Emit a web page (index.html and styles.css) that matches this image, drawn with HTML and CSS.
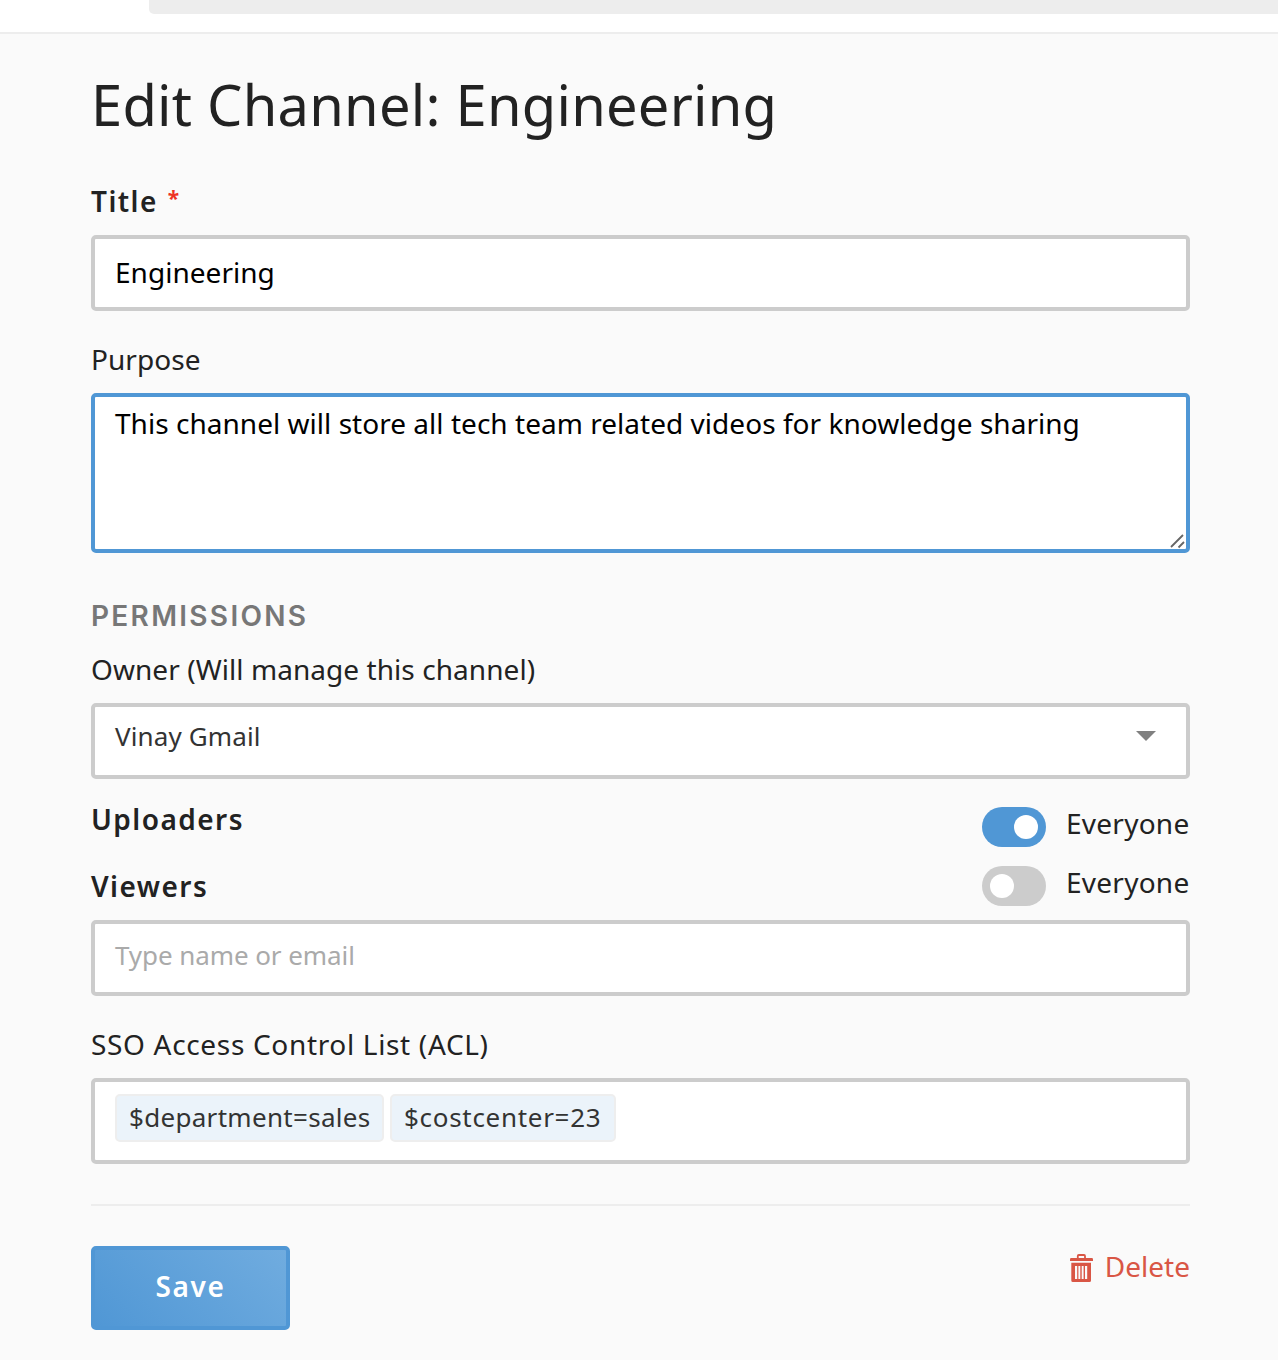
FILE: index.html
```html
<!DOCTYPE html>
<html lang="en">
<head>
<meta charset="utf-8">
<title>Edit Channel: Engineering</title>
<link rel="stylesheet" href="styles.css">
</head>
<body>
<header class="topbar"><div class="search"></div></header>
<main class="page">
  <h1 class="heading">Edit Channel: Engineering</h1>
  <form class="form">
    <label class="label strong title-label" for="title">Title<span class="required">*</span></label>
    <input class="field title-input" id="title" value="Engineering">
    <label class="label purpose-label" for="purpose">Purpose</label>
    <div class="textarea-wrap">
      <textarea class="field purpose" id="purpose">This channel will store all tech team related videos for knowledge sharing</textarea>
      <svg class="grip" width="16" height="16" viewBox="0 0 16 16"><path d="M2 14 14 2M9.500 14.500 15 9" stroke="#666" stroke-width="1.800" fill="none"/></svg>
    </div>
    <h2 class="section">PERMISSIONS</h2>
    <label class="label">Owner (Will manage this channel)</label>
    <div class="field select">Vinay Gmail<i class="caret"></i></div>
    <div class="row uploaders"><span class="label strong uploaders-name">Uploaders</span><span class="switch on"></span><span class="everyone">Everyone</span></div>
    <div class="row viewers"><span class="label strong viewers-name">Viewers</span><span class="switch"></span><span class="everyone">Everyone</span></div>
    <div class="field people">Type name or email</div>
    <label class="label acl-label">SSO Access Control List (ACL)</label>
    <div class="field tags"><span class="tag dept">$department=sales</span><span class="tag cost">$costcenter=23</span></div>
    <div class="actions">
      <button class="save" type="button">Save</button>
      <a class="delete"><svg width="24" height="28" viewBox="0 0 24 28" fill="none" stroke="#d95645"><path d="M7.800 4V2Q7.800 1 8.800 1H14Q15 1 15 2V4" stroke-width="1.800"/><path d="M0 7V5.200Q0 4 1.200 4H21.800Q23 4 23 5.200V7Z" fill="#d95645" stroke="none"/><path fill="#d95645" fill-rule="evenodd" stroke="none" d="M1.300 8.800H21V26.500Q21 28 19.500 28H2.800Q1.300 28 1.300 26.500ZM5 12V25H7.200V12ZM8.400 12V25H10.300V12ZM11.700 12V25H13.600V12ZM15 12V25H17.200V12Z"/></svg><span>Delete</span></a>
    </div>
  </form>
</main>
</body>
</html>
```
FILE: styles.css
```css
* { box-sizing: border-box; }
body { margin: 0; min-height: 1360px; background: #fafafa; color: #222; font: 28px/34px "Noto Sans", sans-serif; }
.topbar { height: 34px; padding-left: 149px; background: #fff; border-bottom: 2px solid #ededed; }
.search { height: 14px; background: #ededed; border-radius: 0 0 0 5px; }
.page { padding: 42px 88px 30px 91px; }
.heading { margin: 0 0 52px; font-size: 56px; line-height: 56px; font-weight: 400; letter-spacing: 0.25px; }
.form { display: flex; flex-direction: column; }
.label { display: flex; white-space: nowrap; letter-spacing: 0.06px; }
.strong { font-weight: 600; letter-spacing: 1.45px; }
.required { margin-left: 10px; color: #ee3124; font-size: 21px; font-weight: 700; line-height: 29px; }
.field { display: flex; align-items: center; width: 100%; height: 76px; margin: 17px 0 0; padding: 0 20px; border: 4px solid #ccc; border-radius: 5px; background: #fff; outline: 0; color: #000; font: inherit; letter-spacing: 0.03px; }
.title-input { padding-bottom: 2px; }
.purpose-label { margin-top: 31px; }
.textarea-wrap { position: relative; height: 177px; }
.purpose { display: block; height: 160px; padding-top: 8px; line-height: 36px; border-color: #5097d5; resize: none; overflow: hidden; }
.grip { position: absolute; right: 5px; bottom: 4px; }
.section { margin: 46px 0 19px; font: 600 28px/34px Inter, sans-serif; letter-spacing: 2.3px; color: #777; }
.select { justify-content: space-between; padding: 0 30px 10px 20px; font-size: 26px; letter-spacing: 0.12px; color: #333; }
.caret { border: 10px solid transparent; border-top-color: #808080; border-bottom: 0; }
.row { display: flex; align-items: flex-start; height: 40px; }
.uploaders { margin-top: 28px; }
.viewers { margin-top: 19px; }
.row .label { margin-right: auto; }
.uploaders-name { margin-top: -5px; }
.viewers-name { margin-top: 3px; }
.switch { width: 64px; height: 40px; padding: 8px; border-radius: 20px; background: #ccc; }
.switch::before { content: ""; display: block; width: 24px; height: 24px; border-radius: 50%; background: #fff; }
.switch.on { background: #5097d5; }
.switch.on::before { margin-left: auto; }
.everyone { width: 124px; margin: -1px 0 0 20px; letter-spacing: 0.25px; }
.people { margin-top: 14px; padding-bottom: 6px; font-size: 26px; letter-spacing: -0.08px; color: #aaa; }
.acl-label { margin-top: 31px; letter-spacing: 0.67px; }
.tags { align-items: flex-start; gap: 6px; height: 86px; padding-top: 12px; font-size: 26px; color: #333; }
.tag { height: 48px; padding: 0 12px; border: 2px solid #eee; border-radius: 5px; background: #ebf3fa; line-height: 42px; }
.dept { width: 269px; letter-spacing: 0.3px; }
.cost { width: 226px; letter-spacing: 0.7px; }
.actions { display: flex; justify-content: space-between; align-items: flex-start; margin-top: 40px; padding-top: 40px; border-top: 2px solid #ededed; }
.save { width: 199px; height: 84px; padding: 0 0 4px; border: 4px solid #5097d5; border-radius: 5px; background: linear-gradient(45deg, #5097d5, #70acdf); color: #fff; font: inherit; font-weight: 600; letter-spacing: 1.6px; }
.delete { display: flex; color: #d95645; }
.delete svg { margin: 8px 11px 0 0; }
.delete span { margin-top: 3px; }
```
